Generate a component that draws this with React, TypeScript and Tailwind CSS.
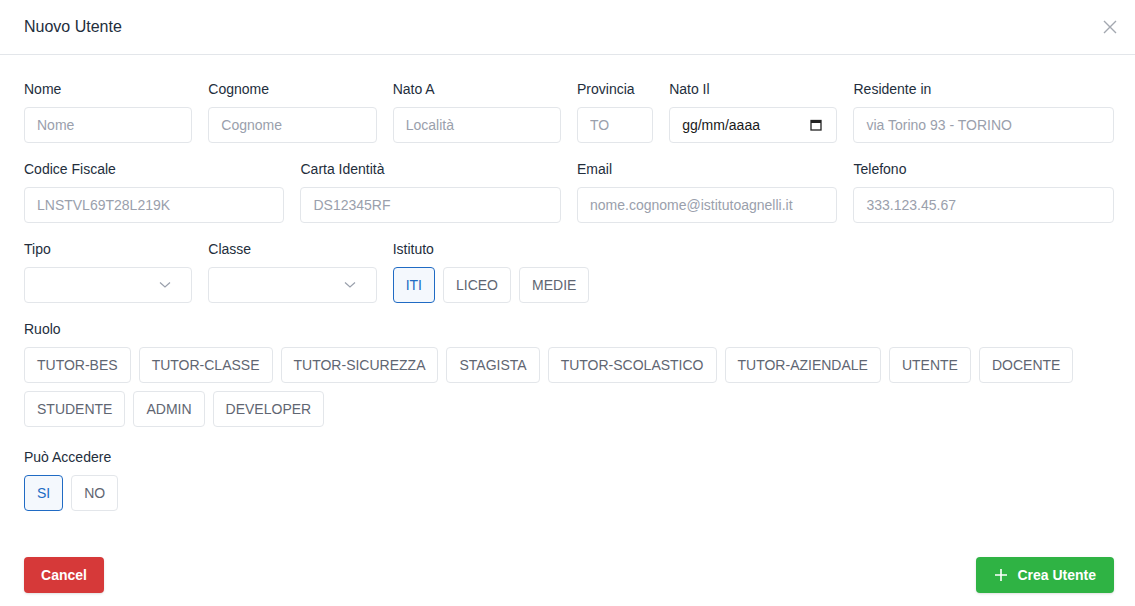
import React from "react";

const font = { fontFamily: '"Liberation Sans", Arial, sans-serif' };

function Label({ children }: { children: React.ReactNode }) {
  return <label className="block text-sm leading-5 text-[#232e3c] mb-2">{children}</label>;
}

function TextInput({ placeholder }: { placeholder: string }) {
  return (
    <input
      type="text"
      placeholder={placeholder}
      className="w-full h-9 px-3 rounded border border-[#e3e6ea] bg-white text-sm text-[#232e3c] placeholder-[#9aa0ac] outline-none"
    />
  );
}

function Field({
  label,
  placeholder,
  span,
}: {
  label: string;
  placeholder: string;
  span: string;
}) {
  return (
    <div className={span}>
      <Label>{label}</Label>
      <TextInput placeholder={placeholder} />
    </div>
  );
}

function SelectBox() {
  return (
    <div className="w-full h-9 px-3 rounded border border-[#e3e6ea] bg-white flex items-center justify-end">
      <svg width="12" height="8" viewBox="0 0 12 8" className="mr-2">
        <path d="M1 1.5 L6 6 L11 1.5" fill="none" stroke="#9aa0ac" strokeWidth="1.2" />
      </svg>
    </div>
  );
}

function Choice({ text, active }: { text: string; active?: boolean }) {
  return (
    <button
      type="button"
      className={
        active
          ? "h-9 px-3 rounded border border-[#206bc4] bg-[#f4f8fd] text-sm text-[#206bc4]"
          : "h-9 px-3 rounded border border-[#e3e6ea] bg-white text-sm text-[#5f6672]"
      }
    >
      {text}
    </button>
  );
}

const ruoli = [
  "TUTOR-BES",
  "TUTOR-CLASSE",
  "TUTOR-SICUREZZA",
  "STAGISTA",
  "TUTOR-SCOLASTICO",
  "TUTOR-AZIENDALE",
  "UTENTE",
  "DOCENTE",
  "STUDENTE",
  "ADMIN",
  "DEVELOPER",
];

export default function App() {
  return (
    <div className="w-[1135px] h-[606px] bg-white overflow-hidden" style={font}>
      <div className="h-[55px] pl-6 pr-[18px] pb-[1px] flex items-center justify-between border-b border-[#e3e6ea]">
        <h2 className="text-base text-[#232e3c]">Nuovo Utente</h2>
        <svg width="14" height="14" viewBox="0 0 14 14">
          <path d="M1 1 L13 13 M13 1 L1 13" stroke="#a3a8b0" strokeWidth="1.4" />
        </svg>
      </div>

      <div className="pl-6 pr-[21px] pt-6">
        <div className="grid grid-cols-12 gap-x-4 gap-y-4">
          <Field span="col-span-2" label="Nome" placeholder="Nome" />
          <Field span="col-span-2" label="Cognome" placeholder="Cognome" />
          <Field span="col-span-2" label="Nato A" placeholder="Località" />
          <Field span="col-span-1" label="Provincia" placeholder="TO" />
          <div className="col-span-2">
            <Label>Nato Il</Label>
            <div className="w-full h-9 px-3 rounded border border-[#e3e6ea] bg-white flex items-center justify-between text-sm text-[#1a1a1a]">
              <span>gg/mm/aaaa</span>
              <svg width="12" height="12" viewBox="0 0 12 12" className="mr-[2px]">
                <rect x="1" y="1.5" width="10" height="9.5" fill="none" stroke="#222" strokeWidth="1.3" />
                <rect x="1" y="1.5" width="10" height="2.5" fill="#222" />
              </svg>
            </div>
          </div>
          <Field span="col-span-3" label="Residente in" placeholder="via Torino 93 - TORINO" />

          <Field span="col-span-3" label="Codice Fiscale" placeholder="LNSTVL69T28L219K" />
          <Field span="col-span-3" label="Carta Identità" placeholder="DS12345RF" />
          <Field span="col-span-3" label="Email" placeholder="nome.cognome@istitutoagnelli.it" />
          <Field span="col-span-3" label="Telefono" placeholder="333.123.45.67" />

          <div className="col-span-2">
            <Label>Tipo</Label>
            <SelectBox />
          </div>
          <div className="col-span-2">
            <Label>Classe</Label>
            <SelectBox />
          </div>
          <div className="col-span-8">
            <Label>Istituto</Label>
            <div className="flex gap-2">
              <Choice text="ITI" active />
              <Choice text="LICEO" />
              <Choice text="MEDIE" />
            </div>
          </div>
        </div>

        <div className="mt-4">
          <Label>Ruolo</Label>
          <div className="flex flex-wrap gap-2">
            {ruoli.map((r) => (
              <Choice key={r} text={r} />
            ))}
          </div>
        </div>

        <div className="mt-5">
          <Label>Può Accedere</Label>
          <div className="flex gap-2">
            <Choice text="SI" active />
            <Choice text="NO" />
          </div>
        </div>
      </div>

      <div className="pl-6 pr-[21px] mt-[46px] flex justify-between">
        <button
          type="button"
          className="h-9 w-20 rounded bg-[#d63939] text-white text-sm font-bold shadow-sm"
        >
          Cancel
        </button>
        <button
          type="button"
          className="h-9 pl-[17px] pr-[18px] rounded bg-[#2fb344] text-white text-sm font-bold shadow-sm flex items-center gap-2"
        >
          <svg width="16" height="16" viewBox="0 0 16 16">
            <path d="M8 2 V14 M2 8 H14" stroke="white" strokeWidth="1.6" />
          </svg>
          Crea Utente
        </button>
      </div>
    </div>
  );
}
